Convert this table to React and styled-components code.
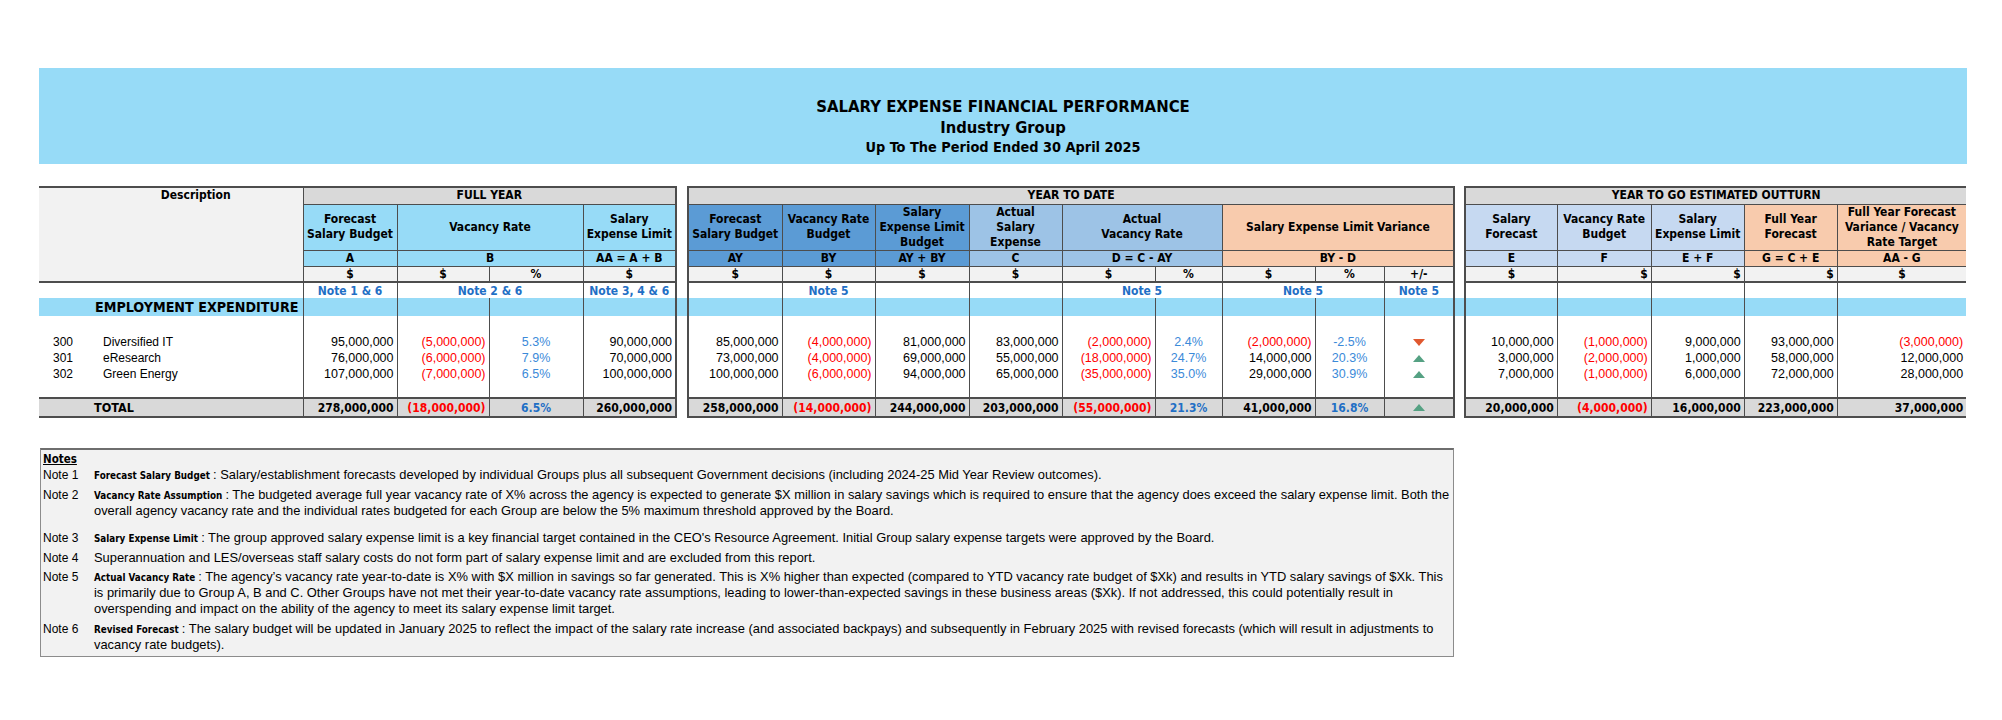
import React from "react";
import styled, { createGlobalStyle } from "styled-components";

const HEAD_FONT = `"DejaVu Sans Condensed", "DejaVu Sans", sans-serif`;
const BODY_FONT = `"Liberation Sans", Arial, sans-serif`;

const colors = {
  sky: "#97dbf7",
  grey: "#d9d9d9",
  pale: "#f2f2f2",
  ytd: "#5b9bd5",
  actual: "#9dc3e6",
  peach: "#f8cbad",
  ytg: "#c6d9f1",
  line: "#4d4d4d",
  note: "#1f6fc5",
  pct: "#3b8ad9",
  red: "#ff0000",
};

const tones = { r: colors.red, p: colors.pct };
const totalTones = { r: colors.red, p: colors.note };

const widths = [50, 214, 94, 92, 94, 93, 12, 94, 93, 94, 93, 93, 67, 93, 69, 70, 11, 92, 94, 93, 93, 129];

const rows = [
  {
    code: "300",
    name: "Diversified IT",
    cells: [
      ["95,000,000"], ["(5,000,000)", "r"], ["5.3%", "p"], ["90,000,000"],
      ["85,000,000"], ["(4,000,000)", "r"], ["81,000,000"], ["83,000,000"], ["(2,000,000)", "r"], ["2.4%", "p"], ["(2,000,000)", "r"], ["-2.5%", "p"], ["down", "i"],
      ["10,000,000"], ["(1,000,000)", "r"], ["9,000,000"], ["93,000,000"], ["(3,000,000)", "r"],
    ],
  },
  {
    code: "301",
    name: "eResearch",
    cells: [
      ["76,000,000"], ["(6,000,000)", "r"], ["7.9%", "p"], ["70,000,000"],
      ["73,000,000"], ["(4,000,000)", "r"], ["69,000,000"], ["55,000,000"], ["(18,000,000)", "r"], ["24.7%", "p"], ["14,000,000"], ["20.3%", "p"], ["up", "i"],
      ["3,000,000"], ["(2,000,000)", "r"], ["1,000,000"], ["58,000,000"], ["12,000,000"],
    ],
  },
  {
    code: "302",
    name: "Green Energy",
    cells: [
      ["107,000,000"], ["(7,000,000)", "r"], ["6.5%", "p"], ["100,000,000"],
      ["100,000,000"], ["(6,000,000)", "r"], ["94,000,000"], ["65,000,000"], ["(35,000,000)", "r"], ["35.0%", "p"], ["29,000,000"], ["30.9%", "p"], ["up", "i"],
      ["7,000,000"], ["(1,000,000)", "r"], ["6,000,000"], ["72,000,000"], ["28,000,000"],
    ],
  },
];

const totals = [
  ["278,000,000"], ["(18,000,000)", "r"], ["6.5%", "p"], ["260,000,000"],
  ["258,000,000"], ["(14,000,000)", "r"], ["244,000,000"], ["203,000,000"], ["(55,000,000)", "r"], ["21.3%", "p"], ["41,000,000"], ["16.8%", "p"], ["up", "i"],
  ["20,000,000"], ["(4,000,000)", "r"], ["16,000,000"], ["223,000,000"], ["37,000,000"],
];

const GlobalStyle = createGlobalStyle`
  body {
    margin: 0;
    background: #fff;
    color: #000;
  }
`;

const Page = styled.div`
  padding: 68px 0 40px 39px;
`;

const TitleBand = styled.header`
  width: 1928px;
  height: 96px;
  box-sizing: border-box;
  padding-top: 28px;
  background: ${colors.sky};
  text-align: center;
  font-family: ${HEAD_FONT};
  font-stretch: condensed;
  font-weight: 700;
`;

const TitleLine = styled.div`
  font-size: ${({ $size }) => $size}px;
  line-height: ${({ $lh }) => $lh}px;
`;

const Sheet = styled.table`
  margin-top: 22px;
  width: 1927px;
  table-layout: fixed;
  border-collapse: collapse;
`;

const Col = styled.col`
  width: ${({ $w }) => $w}px;
`;

const Row = styled.tr`
  height: ${({ $h }) => $h}px;
`;

const Head = styled.th`
  padding: 0 3px;
  background: ${({ $bg }) => $bg || "transparent"};
  border: 1px solid ${colors.line};
  font-family: ${HEAD_FONT};
  font-stretch: condensed;
  font-weight: 700;
  font-size: 12px;
  line-height: 15px;
  text-align: ${({ $align }) => $align || "center"};
  vertical-align: middle;
  white-space: nowrap;
  &:last-child {
    border-right: none;
  }
`;

const Group = styled(Head)`
  background: ${colors.grey};
  border-top: 2px solid ${colors.line};
`;

const DescHead = styled(Head)`
  background: ${colors.pale};
  border-left: none;
  border-top: 2px solid ${colors.line};
  border-bottom: 2px solid ${colors.line};
  vertical-align: top;
  padding: 0 0 0 50px;
`;

const Dollar = styled(Head)`
  background: ${colors.pale};
  border-bottom: 2px solid ${colors.line};
  line-height: 14px;
`;

const Gap = styled.td`
  padding: 0;
  background: ${({ $fill }) => $fill || "#fff"};
  border-left: 2px solid ${colors.line};
  border-right: 2px solid ${colors.line};
`;

const Cell = styled.td`
  padding: 0 3px;
  border-left: 1px solid ${colors.line};
  border-right: 1px solid ${colors.line};
  font-family: ${BODY_FONT};
  font-size: 12.5px;
  line-height: 14px;
  color: ${({ $tone }) => tones[$tone] || "#000"};
  text-align: ${({ $align }) => $align || "right"};
  vertical-align: middle;
  white-space: nowrap;
  &:last-child {
    border-right: none;
  }
`;

const NoteCell = styled(Cell)`
  font-family: ${HEAD_FONT};
  font-stretch: condensed;
  font-weight: 700;
  font-size: 12px;
  color: ${colors.note};
  text-align: center;
`;

const Band = styled(Cell)`
  background: ${colors.sky};
`;

const BandTitle = styled.td`
  padding: 0 4px 0 0;
  background: ${colors.sky};
  font-family: ${HEAD_FONT};
  font-stretch: condensed;
  font-weight: 700;
  font-size: 14.2px;
  line-height: 16px;
  text-align: right;
  white-space: nowrap;
`;

const Plain = styled.td`
  padding: 0 0 0 ${({ $pad }) => $pad || 0}px;
  font-family: ${BODY_FONT};
  font-size: 12px;
  line-height: 14px;
  white-space: nowrap;
`;

const TotalCell = styled(Cell)`
  background: ${colors.grey};
  border-top: 2px solid ${colors.line};
  border-bottom: 2px solid ${colors.line};
  font-family: ${HEAD_FONT};
  font-stretch: condensed;
  font-weight: 700;
  font-size: 12px;
  color: ${({ $tone }) => totalTones[$tone] || "#000"};
`;

const TotalLabel = styled(TotalCell)`
  border-left: none;
  padding-left: 55px;
  text-align: left;
  font-size: 12.5px;
`;

const Arrow = styled.svg`
  display: block;
  margin: 0 auto;
`;

const Notes = styled.section`
  width: 1414px;
  margin: 30px 0 0 1px;
  box-sizing: border-box;
  padding: 1px 6px 3px 2px;
  background: ${colors.pale};
  border: 1px solid #8c8c8c;
  border-top: 2px solid #6e6e6e;
  font-family: ${BODY_FONT};
  font-size: 12.9px;
  line-height: 16px;
`;

const NotesTitle = styled.div`
  font-family: ${HEAD_FONT};
  font-stretch: condensed;
  font-weight: 700;
  font-size: 11.5px;
  text-decoration: underline;
`;

const NoteRow = styled.div`
  display: grid;
  grid-template-columns: 51px 1fr;
  margin-top: ${({ $gap }) => $gap ?? 4}px;
`;

const NoteTag = styled.span`
  font-size: 12px;
`;

const NoteText = styled.div`
  height: 16px;
  white-space: nowrap;
`;

const NoteLabel = styled.span`
  font-family: ${HEAD_FONT};
  font-stretch: condensed;
  font-weight: 700;
  font-size: 9.8px;
  line-height: 1;
`;

const Tri = ({ up }) => (
  <Arrow width="12" height="7" viewBox="0 0 12 7">
    <polygon points={up ? "6,0 12,7 0,7" : "0,0 12,0 6,7"} fill={up ? "#55a183" : "#e0582f"} />
  </Arrow>
);

const renderValues = (cells, Comp) =>
  cells.map(([text, kind], i) =>
    kind === "i" ? (
      <Comp key={i} $align="center">
        <Tri up={text === "up"} />
      </Comp>
    ) : (
      <Comp key={i} $tone={kind} $align={kind === "p" ? "center" : "right"}>
        {text}
      </Comp>
    )
  );

const blanks = (n, key) => Array.from({ length: n }, (_, i) => <Cell key={`${key}${i}`} />);

const noteList = [
  {
    tag: "Note 1",
    label: "Forecast Salary Budget",
    lines: [
      "Salary/establishment forecasts developed by individual Groups plus all subsequent Government decisions (including 2024-25 Mid Year Review outcomes).",
    ],
  },
  {
    tag: "Note 2",
    label: "Vacancy Rate Assumption",
    lines: [
      "The budgeted average full year vacancy rate of X% across the agency is expected to generate $X million in salary savings which is required to ensure that the agency does exceed the salary expense limit. Both the",
      "overall agency vacancy rate and the individual rates budgeted for each Group are below the 5% maximum threshold approved by the Board.",
    ],
  },
  {
    tag: "Note 3",
    gap: 11,
    label: "Salary Expense Limit",
    lines: [
      "The group approved salary expense limit is a key financial target contained in the CEO's Resource Agreement. Initial Group salary expense targets were approved by the Board.",
    ],
  },
  {
    tag: "Note 4",
    lines: [
      "Superannuation and LES/overseas staff salary costs do not form part of salary expense limit and are excluded from this report.",
    ],
  },
  {
    tag: "Note 5",
    gap: 3,
    label: "Actual Vacancy Rate",
    lines: [
      "The agency\u2019s vacancy rate year-to-date is X% with $X million in savings so far generated. This is X% higher than expected (compared to YTD vacancy rate budget of $Xk) and results in YTD salary savings of $Xk. This",
      "is primarily due to Group A, B and C. Other Groups have not met their year-to-date vacancy rate assumptions, leading to lower-than-expected savings in these business areas ($Xk). If not addressed, this could potentially result in",
      "overspending and impact on the ability of the agency to meet its salary expense limit target.",
    ],
  },
  {
    tag: "Note 6",
    label: "Revised Forecast",
    lines: [
      "The salary budget will be updated in January 2025 to reflect the impact of the salary rate increase (and associated backpays) and subsequently in February 2025 with revised forecasts (which will result in adjustments to",
      "vacancy rate budgets).",
    ],
  },
];

const App = () => (
  <Page>
    <GlobalStyle />
    <TitleBand>
      <TitleLine $size={16.6} $lh={21}>SALARY EXPENSE FINANCIAL PERFORMANCE</TitleLine>
      <TitleLine $size={16.4} $lh={21}>Industry Group</TitleLine>
      <TitleLine $size={14.4} $lh={19}>Up To The Period Ended 30 April 2025</TitleLine>
    </TitleBand>

    <Sheet>
      <colgroup>
        {widths.map((w, i) => (
          <Col key={i} $w={w} />
        ))}
      </colgroup>
      <thead>
        <Row $h={17}>
          <DescHead colSpan={2} rowSpan={4}>Description</DescHead>
          <Group colSpan={4}>FULL YEAR</Group>
          <Gap rowSpan={5} />
          <Group colSpan={9}>YEAR TO DATE</Group>
          <Gap rowSpan={5} />
          <Group colSpan={5}>YEAR TO GO ESTIMATED OUTTURN</Group>
        </Row>
        <Row $h={46}>
          <Head $bg={colors.sky}>Forecast<br />Salary Budget</Head>
          <Head $bg={colors.sky} colSpan={2}>Vacancy Rate</Head>
          <Head $bg={colors.sky}>Salary<br />Expense Limit</Head>
          <Head $bg={colors.ytd}>Forecast<br />Salary Budget</Head>
          <Head $bg={colors.ytd}>Vacancy Rate<br />Budget</Head>
          <Head $bg={colors.ytd}>Salary<br />Expense Limit<br />Budget</Head>
          <Head $bg={colors.actual}>Actual<br />Salary<br />Expense</Head>
          <Head $bg={colors.actual} colSpan={2}>Actual<br />Vacancy Rate</Head>
          <Head $bg={colors.peach} colSpan={3}>Salary Expense Limit Variance</Head>
          <Head $bg={colors.ytg}>Salary<br />Forecast</Head>
          <Head $bg={colors.ytg}>Vacancy Rate<br />Budget</Head>
          <Head $bg={colors.ytg}>Salary<br />Expense Limit</Head>
          <Head $bg={colors.peach}>Full Year<br />Forecast</Head>
          <Head $bg={colors.peach}>Full Year Forecast<br />Variance / Vacancy<br />Rate Target</Head>
        </Row>
        <Row $h={16}>
          <Head $bg={colors.sky}>A</Head>
          <Head $bg={colors.sky} colSpan={2}>B</Head>
          <Head $bg={colors.sky}>AA = A + B</Head>
          <Head $bg={colors.ytd}>AY</Head>
          <Head $bg={colors.ytd}>BY</Head>
          <Head $bg={colors.ytd}>AY + BY</Head>
          <Head $bg={colors.actual}>C</Head>
          <Head $bg={colors.actual} colSpan={2}>D = C - AY</Head>
          <Head $bg={colors.peach} colSpan={3}>BY - D</Head>
          <Head $bg={colors.ytg}>E</Head>
          <Head $bg={colors.ytg}>F</Head>
          <Head $bg={colors.ytg}>E + F</Head>
          <Head $bg={colors.peach}>G = C + E</Head>
          <Head $bg={colors.peach}>AA - G</Head>
        </Row>
        <Row $h={16}>
          <Dollar>$</Dollar>
          <Dollar>$</Dollar>
          <Dollar>%</Dollar>
          <Dollar>$</Dollar>
          <Dollar>$</Dollar>
          <Dollar>$</Dollar>
          <Dollar>$</Dollar>
          <Dollar>$</Dollar>
          <Dollar>$</Dollar>
          <Dollar>%</Dollar>
          <Dollar>$</Dollar>
          <Dollar>%</Dollar>
          <Dollar>+/-</Dollar>
          <Dollar>$</Dollar>
          <Dollar $align="right">$</Dollar>
          <Dollar $align="right">$</Dollar>
          <Dollar $align="right">$</Dollar>
          <Dollar>$</Dollar>
        </Row>
        <Row $h={16}>
          <Plain colSpan={2} />
          <NoteCell>Note 1 &amp; 6</NoteCell>
          <NoteCell colSpan={2}>Note 2 &amp; 6</NoteCell>
          <NoteCell>Note 3, 4 &amp; 6</NoteCell>
          <NoteCell />
          <NoteCell>Note 5</NoteCell>
          <NoteCell />
          <NoteCell />
          <NoteCell colSpan={2}>Note 5</NoteCell>
          <NoteCell colSpan={2}>Note 5</NoteCell>
          <NoteCell>Note 5</NoteCell>
          <NoteCell />
          <NoteCell />
          <NoteCell />
          <NoteCell />
          <NoteCell />
        </Row>
      </thead>
      <tbody>
        <Row $h={18}>
          <BandTitle colSpan={2}>EMPLOYMENT EXPENDITURE</BandTitle>
          {widths.slice(2).map((_, i) =>
            i === 4 || i === 14 ? <Gap key={i} $fill={colors.sky} /> : <Band key={i} />
          )}
        </Row>
        <Row $h={18}>
          <Plain colSpan={2} />
          {blanks(4, "a")}
          <Gap rowSpan={6} />
          {blanks(9, "b")}
          <Gap rowSpan={6} />
          {blanks(5, "c")}
        </Row>
        {rows.map((row) => (
          <Row $h={16} key={row.code}>
            <Plain $pad={14}>{row.code}</Plain>
            <Plain $pad={14}>{row.name}</Plain>
            {renderValues(row.cells, Cell)}
          </Row>
        ))}
        <Row $h={16}>
          <Plain colSpan={2} />
          {blanks(18, "d")}
        </Row>
        <Row $h={19}>
          <TotalLabel colSpan={2}>TOTAL</TotalLabel>
          {renderValues(totals, TotalCell)}
        </Row>
      </tbody>
    </Sheet>

    <Notes>
      <NotesTitle>Notes</NotesTitle>
      {noteList.map((note, i) => (
        <NoteRow key={note.tag} $gap={i === 0 ? 0 : note.gap}>
          <NoteTag>{note.tag}</NoteTag>
          <div>
            {note.lines.map((line, j) => (
              <NoteText key={j}>
                {j === 0 && note.label && <NoteLabel>{note.label} </NoteLabel>}
                {j === 0 && note.label ? `: ${line}` : line}
              </NoteText>
            ))}
          </div>
        </NoteRow>
      ))}
    </Notes>
  </Page>
);

export default App;
